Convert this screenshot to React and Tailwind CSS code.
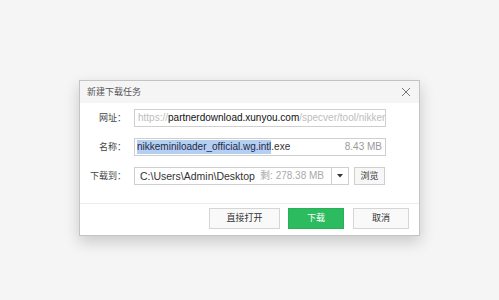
import React from "react";

const cjk = { fontFamily: '"Liberation Sans", "Noto Sans CJK SC", sans-serif' };

export default function App() {
  return (
    <div className="w-[499px] h-[300px] bg-[#f5f5f5] flex justify-center pt-[80px]" style={cjk}>
      <div className="w-[341px] h-[156px] bg-white border border-[#c4c4c4] shadow-[0_6px_14px_rgba(0,0,0,0.18)] flex flex-col">
        <div className="h-[22px] bg-[#f5f5f5] flex items-center justify-between pl-[7px] pr-[8px] shrink-0">
          <span className="text-[9px] text-[#555] leading-none">新建下载任务</span>
          <svg width="10" height="10" viewBox="0 0 10 10" className="block">
            <path d="M1 1 L9 9 M9 1 L1 9" stroke="#777" strokeWidth="1" fill="none" />
          </svg>
        </div>
        <div className="flex flex-col gap-[11px] pt-[6px] pb-[18px] border-b border-[#ececec]">
          <div className="flex items-center">
            <div className="w-[46px] text-right text-[9px] text-[#444] leading-none">网址：</div>
            <div className="ml-[8px] w-[252px] h-[18px] border border-[#cfcfcf] flex items-center px-[3px] overflow-hidden whitespace-nowrap text-[10px] leading-none">
              <span className="text-[#bdbdbd]">https://</span>
              <span className="text-[#111]">partnerdownload.xunyou.com</span>
              <span className="text-[#bdbdbd]">/specver/tool/nikkem</span>
            </div>
          </div>
          <div className="flex items-center">
            <div className="w-[46px] text-right text-[9px] text-[#444] leading-none">名称：</div>
            <div className="ml-[8px] w-[252px] h-[18px] border border-[#cfcfcf] flex items-center pl-[2px] pr-[3px] overflow-hidden whitespace-nowrap text-[10px] leading-none">
              <span className="bg-[#b5cff3] text-[#1f2a44] h-[14px] flex items-center">nikkeminiloader_official.wg.intl</span>
              <span className="text-[#333]">.exe</span>
              <span className="ml-auto text-[#999]">8.43 MB</span>
            </div>
          </div>
          <div className="flex items-center">
            <div className="w-[46px] text-right text-[9px] text-[#444] leading-none">下载到：</div>
            <div className="ml-[8px] w-[215px] h-[18px] border border-[#cfcfcf] flex items-center whitespace-nowrap leading-none text-[10px]">
              <span className="pl-[5px] text-[#333] shrink-0 text-[10.5px]">C:\Users\Admin\Desktop</span>
              <span className="ml-auto pr-[7px] text-[#aaa] shrink-0">剩: 278.38 MB</span>
              <div className="w-[17px] h-full border-l border-[#cfcfcf] flex items-center justify-center shrink-0">
                <svg width="6" height="4" viewBox="0 0 6 4"><path d="M0 0 L6 0 L3 3.5 Z" fill="#333" /></svg>
              </div>
            </div>
            <div className="ml-[5px] w-[31px] h-[18px] border border-[#cfcfcf] bg-[#f7f7f7] flex items-center justify-center text-[9px] text-[#333] leading-none">浏览</div>
          </div>
        </div>
        <div className="flex-1 flex items-start justify-end pt-[4px] pr-[10px] gap-[8px]">
          <div className="w-[71px] h-[21px] border border-[#d5d5d5] bg-[#f9f9f9] flex items-center justify-center text-[9px] text-[#333] leading-none">直接打开</div>
          <div className="w-[56px] h-[21px] border border-[#26b158] bg-[#2dbb60] flex items-center justify-center text-[9px] text-white leading-none">下载</div>
          <div className="w-[56px] h-[21px] border border-[#d5d5d5] bg-[#f9f9f9] flex items-center justify-center text-[9px] text-[#333] leading-none ml-[1px]">取消</div>
        </div>
      </div>
    </div>
  );
}
